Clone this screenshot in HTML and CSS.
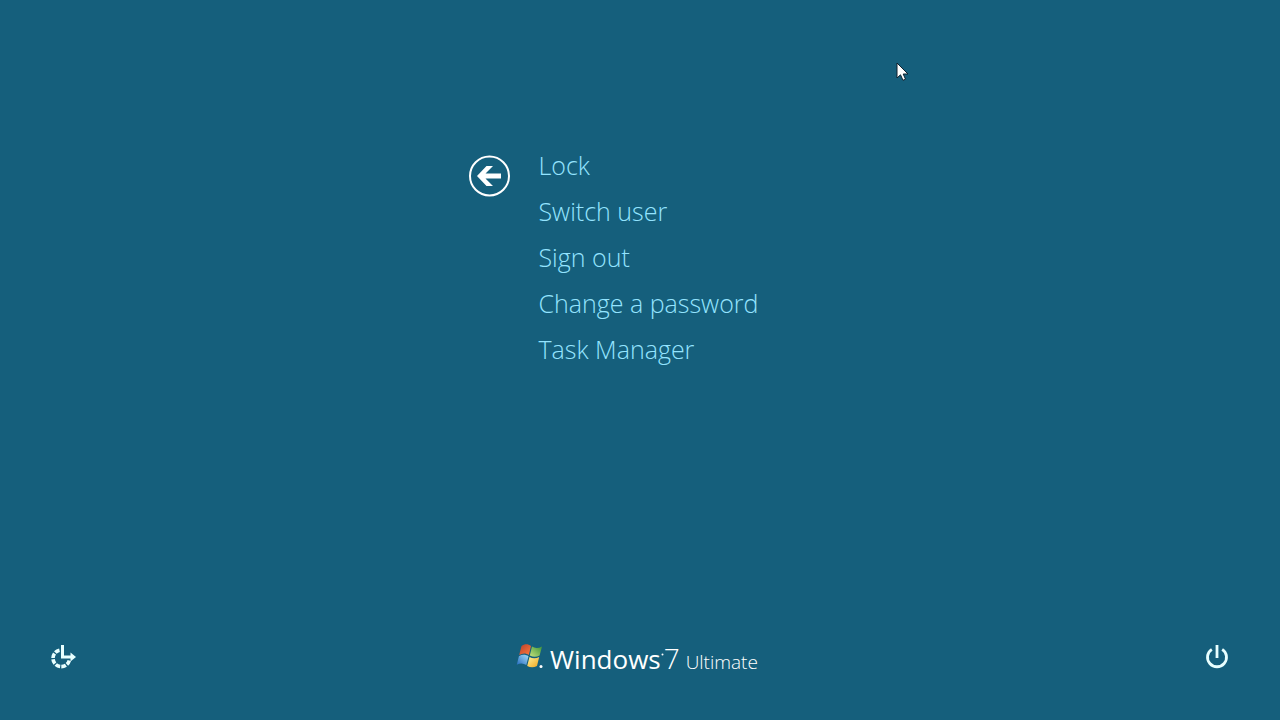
FILE: index.html
```html
<!DOCTYPE html>
<html lang="en">
<head>
  <meta charset="UTF-8">
  <meta name="viewport" content="width=device-width, initial-scale=1.0">
  <title>Windows Security</title>
  <link rel="stylesheet" href="styles.css">
</head>
<body>

  <!-- Security Options -->
  <main class="options">
    <button class="back" type="button" aria-label="Back">
      <svg width="42" height="42" viewBox="0 0 42 42">
        <circle cx="21.500" cy="21" r="19.500" fill="none" stroke="#fff" stroke-width="2"/>
        <path d="M9 21 L18.500 11 H25 L17.500 18.500 H33 V23.500 H17.500 L25 31 H18.500 Z" fill="#fff"/>
      </svg>
    </button>
    <ul class="menu">
      <li><button type="button">Lock</button></li>
      <li><button type="button">Switch user</button></li>
      <li><button type="button">Sign out</button></li>
      <li><button type="button">Change a password</button></li>
      <li><button type="button">Task Manager</button></li>
    </ul>
  </main>

  <!-- Bottom Bar -->
  <footer class="bottom-bar">
    <button class="icon-btn" type="button" aria-label="Ease of access">
      <svg width="28" height="28" viewBox="0 0 28 28" fill="none" stroke="#e8ffff">
        <path d="M10.500 7.200 A8.300 8.300 0 1 0 20.300 17.500" stroke-width="3.600" stroke-dasharray="4.800 1.200"/>
        <path d="M13.500 2 V14 H22" stroke-width="3"/>
        <path d="M21.500 9.500 L27 14 L21.500 18.500 Z" fill="#e8ffff" stroke="none"/>
      </svg>
    </button>

    <div class="brand">
      <svg class="flag" width="30" height="30" viewBox="0 0 30 30">
        <defs>
          <linearGradient id="red" x1="0" y1="0" x2="1" y2="1">
            <stop offset="0" stop-color="#b8402c"/>
            <stop offset="1" stop-color="#ff7a3c"/>
          </linearGradient>
          <linearGradient id="green" x1="0" y1="1" x2="1" y2="0">
            <stop offset="0" stop-color="#c4e27c"/>
            <stop offset="1" stop-color="#3d9439"/>
          </linearGradient>
          <linearGradient id="blue" x1="0" y1="1" x2="1" y2="0">
            <stop offset="0" stop-color="#246bc0"/>
            <stop offset="1" stop-color="#a4dcf8"/>
          </linearGradient>
          <linearGradient id="yellow" x1="0" y1="0" x2="1" y2="1">
            <stop offset="0" stop-color="#fff29a"/>
            <stop offset="1" stop-color="#f0a51c"/>
          </linearGradient>
        </defs>
        <path d="M5.500 4 C8.500 1.800 12 1.800 15 4 L12.800 13 C10 11 6.500 11 3.200 13 Z" fill="url(#red)"/>
        <path d="M16 4.600 C19 6.500 22.500 6.300 26 4.400 L23.600 13.500 C20.500 15.300 17 15.300 13.800 13.500 Z" fill="url(#green)"/>
        <path d="M2.900 14.200 C6 12.300 9.500 12.300 12.500 14.300 L10.300 23 C7.300 21 4 21 0.800 22.800 Z" fill="url(#blue)"/>
        <path d="M13.500 14.900 C16.500 16.700 20 16.700 23.200 14.900 L21 24 C17.800 25.800 14.300 25.800 11.200 23.900 Z" fill="url(#yellow)"/>
        <circle cx="25" cy="24.500" r="1.500" fill="#fff"/>
      </svg>
      <span class="name">Windows</span>
      <svg class="mark" width="3" height="16" viewBox="0 0 3 16">
        <circle cx="1.500" cy="1.500" r="1" fill="#fff"/>
      </svg>
      <span class="version">7</span>
      <span class="edition">Ultimate</span>
    </div>

    <button class="icon-btn" type="button" aria-label="Shut down">
      <svg width="28" height="28" viewBox="0 0 28 28" fill="none" stroke="#e8ffff" stroke-width="2.800">
        <path d="M8.800 6.300 A9.500 9.500 0 1 0 19.200 6.300"/>
        <path d="M14 2 V15"/>
      </svg>
    </button>
  </footer>

  <!-- Mouse Pointer -->
  <svg class="cursor" width="13" height="20" viewBox="0 0 13 20">
    <path d="M1 1 V16 L4.500 12.800 L7 18.300 L9.500 17.200 L7.200 12 H12 Z" fill="#fff" stroke="#10202c" stroke-width="1"/>
  </svg>

</body>
</html>
```
FILE: styles.css
```css
/* General Styles */
* {
  box-sizing: border-box;
}

body {
  font-family: 'Open Sans', 'Noto Sans', sans-serif;
  background-color: #155f7c;
  color: #fff;
  margin: 0;
  min-height: 100vh;
  display: flex;
  flex-direction: column;
  justify-content: space-between;
}

button {
  padding: 0;
  border: none;
  background: none;
  color: inherit;
  font: inherit;
  cursor: pointer;
}

svg {
  display: block;
}

/* Security Options */
.options {
  display: flex;
  align-items: flex-start;
  gap: 28px;
  padding: 142px 20px 0 36.6%;
}

.back {
  margin-top: 13px;
}

.menu {
  list-style: none;
  margin: 0;
  padding: 0;
  color: #94e4ff;
  font-size: 25px;
  font-weight: 300;
  line-height: 46px;
}

.menu li {
  height: 46px;
}

.menu button:hover {
  color: #fff;
}

/* Bottom Bar */
.bottom-bar {
  display: flex;
  justify-content: space-between;
  align-items: center;
  padding: 0 49px 38px;
}

.brand {
  display: flex;
  align-items: baseline;
  padding: 6px 6px 0 0;
  line-height: 40px;
}

.flag {
  align-self: flex-start;
  margin: 4px 4px 0 0;
}

.name {
  font-size: 26px;
}

.version {
  margin-right: 6px;
  font-size: 28px;
  font-weight: 300;
}

.edition {
  font-size: 19px;
  font-weight: 300;
}

/* Mouse Pointer */
.cursor {
  position: absolute;
  top: 62px;
  left: 896px;
  pointer-events: none;
}
```
